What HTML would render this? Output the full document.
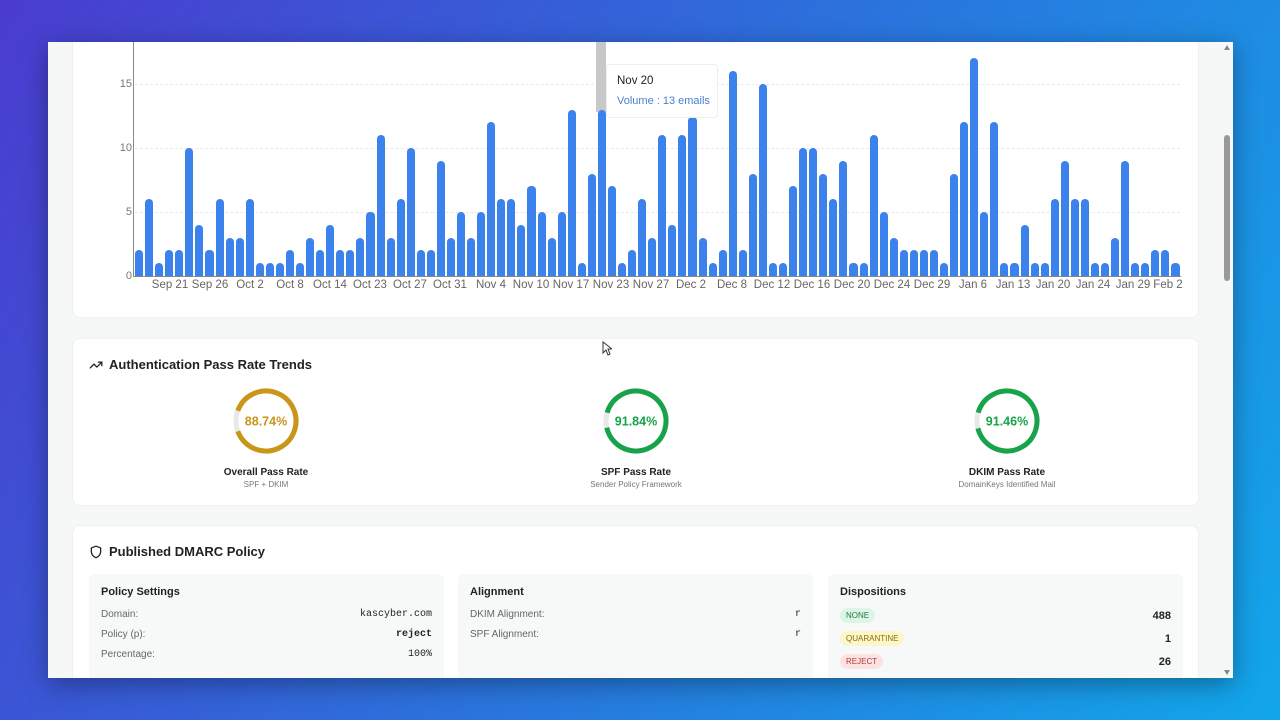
<!DOCTYPE html>
<html><head><meta charset="utf-8">
<style>
*{box-sizing:border-box;margin:0;padding:0}
body{width:1280px;height:720px;overflow:hidden;position:relative;font-family:"Liberation Sans",sans-serif;
background:linear-gradient(120deg,#4a3ccf 0%,#3560d8 35%,#2382e0 65%,#12a6ea 100%);}
.win{position:absolute;left:48px;top:42px;width:1185px;height:636px;background:#f6f8f8;box-shadow:0 6px 24px rgba(0,0,0,.35);overflow:hidden}
.card{position:absolute;background:#fff;border-radius:8px;left:24px;width:1127px;border:1px solid #eef1f1}
.abs{position:absolute}
.grid{position:absolute;border-top:1px dashed #e8eaea;left:87px;width:1045px}
.bars{position:absolute;left:87px;width:1044px;height:240px;display:flex;align-items:flex-end;gap:2px}
.bars div{flex:1;background:#3b82ec;border-radius:4px 4px 0 0}
.yl{position:absolute;font-size:11px;color:#777;right:1101px;width:30px;text-align:right}
.xl{position:absolute;top:237px;font-size:11.5px;color:#666;transform:translateX(-50%);white-space:nowrap}
.title{position:absolute;font-size:13px;font-weight:bold;color:#222;display:flex;align-items:center;gap:6px}
.g{position:absolute;width:200px;text-align:center}
.g .t{font-size:10px;font-weight:bold;color:#222;margin-top:6px}
.g .s{font-size:8px;color:#777;margin-top:2px}
.sub{position:absolute;top:48px;height:110px;width:355px;background:#f7f9f9;border-radius:6px;padding:12px}
.sub h4{font-size:11px;font-weight:bold;color:#222;margin-bottom:6px}
.row{display:flex;justify-content:space-between;font-size:10px;color:#666;height:20px;align-items:center}
.row b{font-family:"Liberation Mono",monospace;color:#222;font-size:10px}
.pill{font-size:8px;padding:3px 6px;border-radius:8px}
.num{font-weight:bold;color:#222;font-size:11px}
</style></head><body>
<div class="win">
  <div class="card" style="top:-20px;height:296px;border-top:none"></div>
  <div class="abs" style="left:0;top:0;width:1185px;height:276px">
    <div class="grid" style="top:42px"></div>
    <div class="grid" style="top:106px"></div>
    <div class="grid" style="top:170px"></div>
    <div class="abs" style="left:548px;top:0;width:10px;height:70px;background:#c8c8c8"></div>
    <div class="bars" style="bottom:42px">
<div style="height:calc(12.8px*2)"></div><div style="height:calc(12.8px*6)"></div><div style="height:calc(12.8px*1)"></div><div style="height:calc(12.8px*2)"></div><div style="height:calc(12.8px*2)"></div><div style="height:calc(12.8px*10)"></div><div style="height:calc(12.8px*4)"></div><div style="height:calc(12.8px*2)"></div><div style="height:calc(12.8px*6)"></div><div style="height:calc(12.8px*3)"></div><div style="height:calc(12.8px*3)"></div><div style="height:calc(12.8px*6)"></div><div style="height:calc(12.8px*1)"></div><div style="height:calc(12.8px*1)"></div><div style="height:calc(12.8px*1)"></div><div style="height:calc(12.8px*2)"></div><div style="height:calc(12.8px*1)"></div><div style="height:calc(12.8px*3)"></div><div style="height:calc(12.8px*2)"></div><div style="height:calc(12.8px*4)"></div><div style="height:calc(12.8px*2)"></div><div style="height:calc(12.8px*2)"></div><div style="height:calc(12.8px*3)"></div><div style="height:calc(12.8px*5)"></div><div style="height:calc(12.8px*11)"></div><div style="height:calc(12.8px*3)"></div><div style="height:calc(12.8px*6)"></div><div style="height:calc(12.8px*10)"></div><div style="height:calc(12.8px*2)"></div><div style="height:calc(12.8px*2)"></div><div style="height:calc(12.8px*9)"></div><div style="height:calc(12.8px*3)"></div><div style="height:calc(12.8px*5)"></div><div style="height:calc(12.8px*3)"></div><div style="height:calc(12.8px*5)"></div><div style="height:calc(12.8px*12)"></div><div style="height:calc(12.8px*6)"></div><div style="height:calc(12.8px*6)"></div><div style="height:calc(12.8px*4)"></div><div style="height:calc(12.8px*7)"></div><div style="height:calc(12.8px*5)"></div><div style="height:calc(12.8px*3)"></div><div style="height:calc(12.8px*5)"></div><div style="height:calc(12.8px*13)"></div><div style="height:calc(12.8px*1)"></div><div style="height:calc(12.8px*8)"></div><div style="height:calc(12.8px*13)"></div><div style="height:calc(12.8px*7)"></div>
<div style="height:calc(12.8px*1)"></div><div style="height:calc(12.8px*2)"></div><div style="height:calc(12.8px*6)"></div><div style="height:calc(12.8px*3)"></div><div style="height:calc(12.8px*11)"></div><div style="height:calc(12.8px*4)"></div><div style="height:calc(12.8px*11)"></div><div style="height:calc(12.8px*12.4)"></div><div style="height:calc(12.8px*3)"></div><div style="height:calc(12.8px*1)"></div><div style="height:calc(12.8px*2)"></div><div style="height:calc(12.8px*16)"></div><div style="height:calc(12.8px*2)"></div><div style="height:calc(12.8px*8)"></div><div style="height:calc(12.8px*15)"></div><div style="height:calc(12.8px*1)"></div><div style="height:calc(12.8px*1)"></div><div style="height:calc(12.8px*7)"></div><div style="height:calc(12.8px*10)"></div><div style="height:calc(12.8px*10)"></div><div style="height:calc(12.8px*8)"></div><div style="height:calc(12.8px*6)"></div><div style="height:calc(12.8px*9)"></div><div style="height:calc(12.8px*1)"></div><div style="height:calc(12.8px*1)"></div><div style="height:calc(12.8px*11)"></div><div style="height:calc(12.8px*5)"></div><div style="height:calc(12.8px*3)"></div><div style="height:calc(12.8px*2)"></div><div style="height:calc(12.8px*2)"></div><div style="height:calc(12.8px*2)"></div><div style="height:calc(12.8px*2)"></div><div style="height:calc(12.8px*1)"></div><div style="height:calc(12.8px*8)"></div><div style="height:calc(12.8px*12)"></div><div style="height:calc(12.8px*17)"></div><div style="height:calc(12.8px*5)"></div><div style="height:calc(12.8px*12)"></div><div style="height:calc(12.8px*1)"></div><div style="height:calc(12.8px*1)"></div><div style="height:calc(12.8px*4)"></div><div style="height:calc(12.8px*1)"></div><div style="height:calc(12.8px*1)"></div><div style="height:calc(12.8px*6)"></div><div style="height:calc(12.8px*9)"></div><div style="height:calc(12.8px*6)"></div><div style="height:calc(12.8px*6)"></div><div style="height:calc(12.8px*1)"></div><div style="height:calc(12.8px*1)"></div><div style="height:calc(12.8px*3)"></div><div style="height:calc(12.8px*9)"></div><div style="height:calc(12.8px*1)"></div><div style="height:calc(12.8px*1)"></div><div style="height:calc(12.8px*2)"></div><div style="height:calc(12.8px*2)"></div><div style="height:calc(12.8px*1)"></div>
    </div>
    <div class="abs" style="left:85px;top:0;width:1px;height:235px;background:#888"></div>
    <div class="abs" style="left:85px;top:234px;width:1048px;height:1px;background:#888"></div>
    <div class="yl" style="top:36px">15</div>
    <div class="yl" style="top:100px">10</div>
    <div class="yl" style="top:164px">5</div>
    <div class="yl" style="top:228px">0</div>
    <div class="xl" style="left:122px">Sep 21</div><div class="xl" style="left:162px">Sep 26</div><div class="xl" style="left:202px">Oct 2</div><div class="xl" style="left:242px">Oct 8</div><div class="xl" style="left:282px">Oct 14</div><div class="xl" style="left:322px">Oct 23</div><div class="xl" style="left:362px">Oct 27</div><div class="xl" style="left:402px">Oct 31</div><div class="xl" style="left:443px">Nov 4</div><div class="xl" style="left:483px">Nov 10</div><div class="xl" style="left:523px">Nov 17</div><div class="xl" style="left:563px">Nov 23</div><div class="xl" style="left:603px">Nov 27</div><div class="xl" style="left:643px">Dec 2</div><div class="xl" style="left:684px">Dec 8</div><div class="xl" style="left:724px">Dec 12</div><div class="xl" style="left:764px">Dec 16</div><div class="xl" style="left:804px">Dec 20</div><div class="xl" style="left:844px">Dec 24</div><div class="xl" style="left:884px">Dec 29</div><div class="xl" style="left:925px">Jan 6</div><div class="xl" style="left:965px">Jan 13</div><div class="xl" style="left:1005px">Jan 20</div><div class="xl" style="left:1045px">Jan 24</div><div class="xl" style="left:1085px">Jan 29</div><div class="xl" style="left:1120px">Feb 2</div>
    <div class="abs" style="left:558px;top:22px;width:112px;height:54px;background:rgba(255,255,255,.96);border:1px solid #eee;border-radius:4px;padding:10px 10px;white-space:nowrap">
      <div style="font-size:11.5px;color:#222">Nov 20</div>
      <div style="font-size:11px;color:#4a7fd4;margin-top:8px">Volume : 13 emails</div>
    </div>
  </div>

  <div class="card" style="top:296px;height:168px">
    <div class="title" style="left:16px;top:18px">
      <svg width="14" height="14" viewBox="0 0 24 24" fill="none" stroke="#222" stroke-width="2.2" stroke-linecap="round" stroke-linejoin="round"><path d="M22 7l-8.5 8.5-5-5L2 17"/><path d="M16 7h6v6"/></svg>
      Authentication Pass Rate Trends</div>
    <div class="g" style="left:93px;top:47px">
      <svg width="70" height="70" viewBox="0 0 70 70"><circle cx="35" cy="35" r="30" fill="none" stroke="#e8e8e8" stroke-width="5"/><circle cx="35" cy="35" r="30" fill="none" stroke="#c9961a" stroke-width="5" stroke-dasharray="167.3 188.5" transform="rotate(200 35 35)"/><text x="35" y="39.5" text-anchor="middle" font-size="12.5" font-weight="bold" fill="#c9961a" font-family="Liberation Sans">88.74%</text></svg>
      <div class="t">Overall Pass Rate</div><div class="s">SPF + DKIM</div></div>
    <div class="g" style="left:463px;top:47px">
      <svg width="70" height="70" viewBox="0 0 70 70"><circle cx="35" cy="35" r="30" fill="none" stroke="#e8e8e8" stroke-width="5"/><circle cx="35" cy="35" r="30" fill="none" stroke="#16a34a" stroke-width="5" stroke-dasharray="173.1 188.5" transform="rotate(196 35 35)"/><text x="35" y="39.5" text-anchor="middle" font-size="12.5" font-weight="bold" fill="#16a34a" font-family="Liberation Sans">91.84%</text></svg>
      <div class="t">SPF Pass Rate</div><div class="s">Sender Policy Framework</div></div>
    <div class="g" style="left:834px;top:47px">
      <svg width="70" height="70" viewBox="0 0 70 70"><circle cx="35" cy="35" r="30" fill="none" stroke="#e8e8e8" stroke-width="5"/><circle cx="35" cy="35" r="30" fill="none" stroke="#16a34a" stroke-width="5" stroke-dasharray="172.4 188.5" transform="rotate(196 35 35)"/><text x="35" y="39.5" text-anchor="middle" font-size="12.5" font-weight="bold" fill="#16a34a" font-family="Liberation Sans">91.46%</text></svg>
      <div class="t">DKIM Pass Rate</div><div class="s">DomainKeys Identified Mail</div></div>
  </div>

  <div class="card" style="top:483px;height:200px">
    <div class="title" style="left:16px;top:18px">
      <svg width="14" height="14" viewBox="0 0 24 24" fill="none" stroke="#222" stroke-width="2.2" stroke-linejoin="round"><path d="M12 2l8 3v6c0 5-3.5 9-8 11-4.5-2-8-6-8-11V5z"/></svg>
      Published DMARC Policy</div>
    <div class="sub" style="left:16px">
      <h4>Policy Settings</h4>
      <div class="row"><span>Domain:</span><b style="font-weight:normal">kascyber.com</b></div>
      <div class="row"><span>Policy (p):</span><b>reject</b></div>
      <div class="row"><span>Percentage:</span><b style="font-weight:normal">100%</b></div>
    </div>
    <div class="sub" style="left:385px">
      <h4>Alignment</h4>
      <div class="row"><span>DKIM Alignment:</span><b style="font-weight:normal">r</b></div>
      <div class="row"><span>SPF Alignment:</span><b style="font-weight:normal">r</b></div>
    </div>
    <div class="sub" style="left:755px">
      <h4>Dispositions</h4>
      <div class="row" style="height:23px"><span class="pill" style="background:#dcf5e6;color:#1f7a45">NONE</span><span class="num">488</span></div>
      <div class="row" style="height:23px"><span class="pill" style="background:#fdf6c8;color:#8a6d0b">QUARANTINE</span><span class="num">1</span></div>
      <div class="row" style="height:23px"><span class="pill" style="background:#fde2e2;color:#b03a3a">REJECT</span><span class="num">26</span></div>
    </div>
  </div>

  <div class="abs" style="right:0;top:0;width:12px;height:636px;background:#f6f8f8"></div>
  <div class="abs" style="right:3px;top:3px;width:0;height:0;border-left:3px solid transparent;border-right:3px solid transparent;border-bottom:5px solid #888"></div>
  <div class="abs" style="right:3px;bottom:3px;width:0;height:0;border-left:3px solid transparent;border-right:3px solid transparent;border-top:5px solid #888"></div>
  <div class="abs" style="right:3px;top:93px;width:6px;height:146px;background:#999;border-radius:3px"></div>
  <svg class="abs" style="left:554px;top:299px" width="10" height="15" viewBox="0 0 10 15"><path d="M1 1v11l3-3 2 5 2-1-2-5h4z" fill="#fff" stroke="#333" stroke-width="1"/></svg>
</div>
</body></html>
